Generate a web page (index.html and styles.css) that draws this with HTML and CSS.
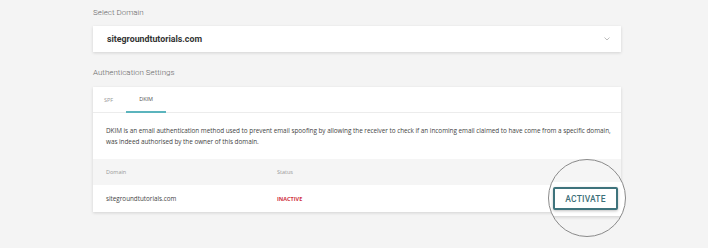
FILE: index.html
```html
<!DOCTYPE html>
<html lang="en">

<head>
  <meta charset="UTF-8">
  <meta name="viewport" content="width=device-width, initial-scale=1.0">
  <title>Email Authentication</title>
  <link rel="stylesheet" href="styles.css">
</head>

<body>
  <div class="page">
    <div class="section-label">Select Domain</div>
    <div class="domain-select">
      <span class="domain-name">sitegroundtutorials.com</span>
      <svg class="chevron" width="6" height="4" viewBox="0 0 6 4">
        <path d="M0.5 0.5 L3 3 L5.5 0.5" fill="none" stroke="#b5b5b5" stroke-width="0.9" />
      </svg>
    </div>

    <div class="section-label second">Authentication Settings</div>
    <div class="auth-card">
      <div class="tabs">
        <div class="tab">SPF</div>
        <div class="tab active">DKIM</div>
      </div>
      <div class="description">
        DKIM is an email authentication method used to prevent email spoofing by allowing the receiver to check if an incoming email claimed to have come from a specific domain, was indeed authorised by the owner of this domain.
      </div>
      <div class="table-head">
        <div class="col-domain">Domain</div>
        <div class="col-status">Status</div>
      </div>
      <div class="table-row">
        <div class="col-domain">sitegroundtutorials.com</div>
        <div class="col-status status-inactive">INACTIVE</div>
        <button class="activate">ACTIVATE</button>
      </div>
      <div class="lens"></div>
    </div>
  </div>
</body>

</html>
```

FILE: styles.css
```css
body {
  margin: 0;
  min-height: 248px;
  background: #f4f4f4;
  font-family: Roboto, "Open Sans", Arial, sans-serif;
  color: #333;
}

.page {
  width: 528px;
  margin-left: 93px;
  padding-top: 7px;
  padding-bottom: 36px;
}

.section-label {
  font-size: 8px;
  font-weight: 300;
  line-height: 12px;
  color: #666;
  margin-bottom: 7px;
}

.section-label.second {
  margin-top: 15px;
  margin-bottom: 8px;
}

.domain-select {
  height: 26px;
  background: #fff;
  box-shadow: 0 1px 3px rgba(0, 0, 0, 0.14);
  display: flex;
  align-items: center;
  justify-content: space-between;
  padding: 0 11px 0 14px;
}

.domain-name {
  font-size: 8.8px;
  font-weight: 700;
  color: #333;
}

.auth-card {
  position: relative;
  background: #fff;
  box-shadow: 0 1px 3px rgba(0, 0, 0, 0.14);
}

.tabs {
  display: flex;
  height: 25px;
  border-bottom: 1px solid #ececec;
  padding-left: 2px;
}

.tab {
  font-family: "Open Sans", sans-serif;
  font-size: 5.5px;
  color: #999;
  padding: 0 9px;
  display: flex;
  align-items: center;
  margin-right: 4px;
}

.tab.active {
  color: #555;
  padding: 0 13px;
  border-bottom: 2px solid #5bb4bd;
  margin-bottom: -1px;
}

.description {
  font-family: "Open Sans", sans-serif;
  font-size: 6.4px;
  letter-spacing: -0.04px;
  line-height: 10.5px;
  color: #444;
  padding: 13px 6px 0 13px;
  height: 33px;
}

.table-head {
  display: flex;
  align-items: center;
  height: 26px;
  background: #f5f5f5;
  padding-left: 13px;
  font-family: "Open Sans", sans-serif;
  font-size: 5.5px;
  color: #999;
}

.col-domain {
  width: 171px;
}

.table-row {
  display: flex;
  align-items: center;
  height: 27px;
  padding: 0 3px 0 13px;
  font-family: "Open Sans", sans-serif;
  font-size: 6.3px;
  color: #444;
}

.status-inactive {
  color: #d0343f;
  font-weight: 700;
  font-size: 5.5px;
}

.activate {
  position: relative;
  z-index: 2;
  margin-left: auto;
  width: 65px;
  height: 23px;
  background: #fff;
  border: 2px solid #3e737c;
  border-radius: 2px;
  box-shadow: 0 1px 3px rgba(0, 0, 0, 0.25);
  color: #3e6f78;
  font-family: Roboto, sans-serif;
  font-weight: 500;
  font-size: 8.5px;
  letter-spacing: 0.2px;
  padding: 0;
}

.lens {
  position: absolute;
  left: 455px;
  top: 72px;
  width: 76px;
  height: 76px;
  border: 1.5px solid #8a8a8a;
  border-radius: 50%;
  z-index: 1;
  background: linear-gradient(to bottom, #f5f5f5 0, #f5f5f5 22px, #fff 22px, #fff 56px, #d8d8d8 56px, #e8e8e8 58px, #f4f4f4 60px);
}
```
